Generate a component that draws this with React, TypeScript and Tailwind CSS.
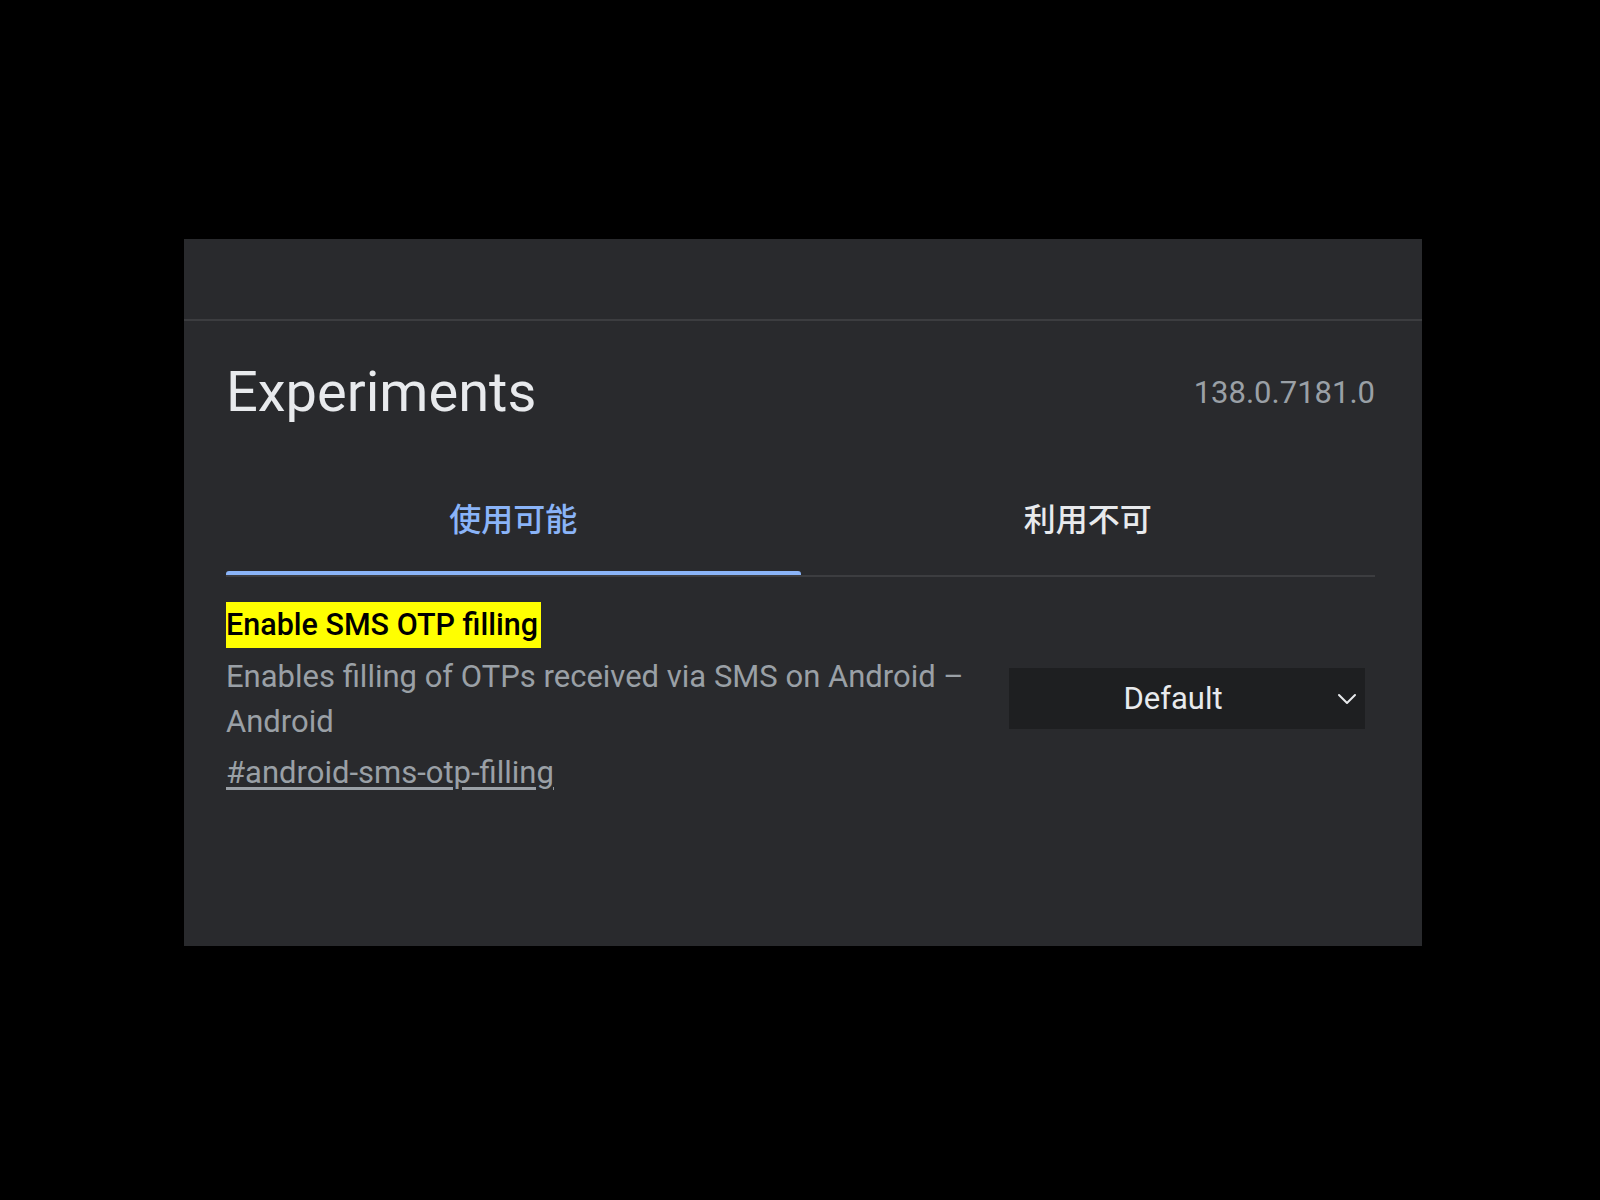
import React, { useState } from 'react';

const TABS = ['使用可能', '利用不可'];

const ChevronDown: React.FC = () => (
  <svg width="20" height="12" viewBox="0 0 20 12" fill="none" className="shrink-0">
    <polyline points="2,2 10,10 18,2" stroke="#e8eaed" strokeWidth="2" strokeLinecap="round" strokeLinejoin="round" />
  </svg>
);

export default function App() {
  const [tab, setTab] = useState(0);

  return (
    <div className="min-h-[1200px] w-[1600px] bg-black pl-[184px] pt-[239px] font-['Roboto','Noto_Sans_CJK_JP',sans-serif]">
      <section className="h-[707px] w-[1238px] bg-[#292a2d]">
        <div className="h-[82px] border-b-2 border-[#3c3d40]" />

        <div className="pl-[42px] pr-[47px]">
          <div className="flex items-center justify-between pt-[43px]">
            <h1 className="text-[56px] leading-[56px] text-[#e8eaed]">Experiments</h1>
            <span className="text-[31px] leading-[31px] text-[#9aa0a6]">138.0.7181.0</span>
          </div>

          <div className="mt-[81px] flex border-b-2 border-[#3c3d40]">
            {TABS.map((label, i) => (
              <button
                key={label}
                type="button"
                onClick={() => setTab(i)}
                className="flex flex-1 flex-col items-center"
              >
                <span
                  className={
                    i === tab
                      ? "h-[32px] font-['Noto_Sans_CJK_JP',sans-serif] text-[32px] leading-[32px] font-medium text-[#8ab4f8]"
                      : "h-[32px] font-['Noto_Sans_CJK_JP',sans-serif] text-[32px] leading-[32px] font-medium text-[#e8eaed]"
                  }
                >
                  {label}
                </span>
                <div
                  className={
                    i === tab
                      ? 'mt-[38px] h-[4px] w-full rounded-t-[3px] bg-[#8ab4f8]'
                      : 'mt-[38px] h-[4px] w-full'
                  }
                />
              </button>
            ))}
          </div>

          <div className="mt-[25px] flex items-center justify-between pr-[10px]">
            <div className="w-[750px]">
              <div>
                <span className="inline-block h-[46px] bg-[#ffff00] pr-[3px] text-[30.5px] leading-[46px] font-medium text-black">
                  Enable SMS OTP filling
                </span>
              </div>
              <p className="mt-[6px] text-[31px] leading-[45px] text-[#9aa0a6]">
                Enables filling of OTPs received via SMS on Android – Android
              </p>
              <a
                href="#android-sms-otp-filling"
                className="mt-[6px] block text-[31px] leading-[45px] text-[#9aa0a6] underline underline-offset-[4px]"
              >
                #android-sms-otp-filling
              </a>
            </div>

            <button
              type="button"
              className="flex h-[61px] w-[356px] items-center bg-[#1e1f21] pr-[8px]"
            >
              <span className="flex-1 text-center text-[31px] leading-[31px] text-[#e8eaed]">Default</span>
              <ChevronDown />
            </button>
          </div>
        </div>
      </section>
    </div>
  );
}
